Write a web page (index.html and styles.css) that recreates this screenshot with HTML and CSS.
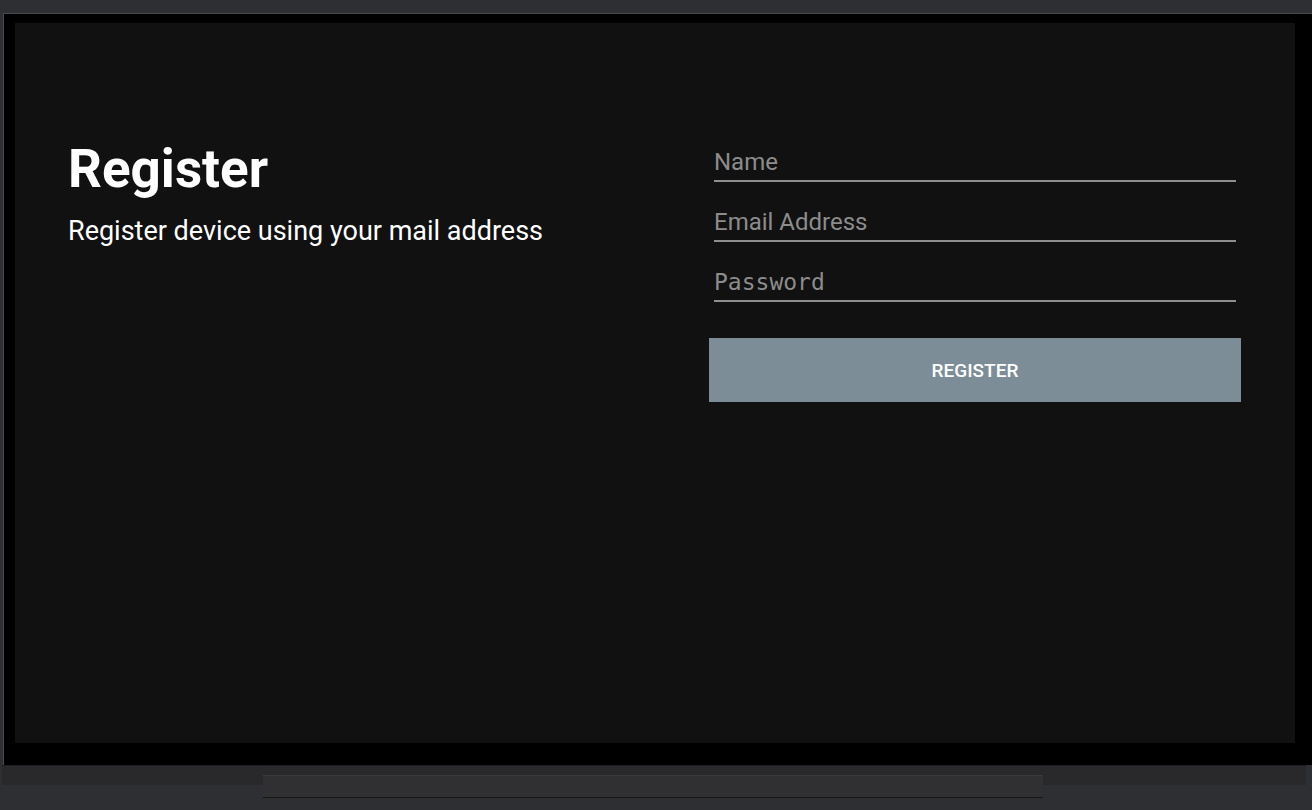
FILE: index.html
```html
<!DOCTYPE html>
<html lang="en">
<head>
<meta charset="utf-8">
<title>Register</title>
<link rel="stylesheet" href="styles.css">
</head>
<body>
<div class="device">
  <div class="tv">
    <div class="screen">
      <div class="intro">
        <h1 class="title">Register</h1>
        <p class="subtitle">Register device using your mail address</p>
      </div>
      <form class="form">
        <label class="field first"><span class="placeholder">Name</span></label>
        <label class="field"><span class="placeholder">Email Address</span></label>
        <label class="field"><span class="placeholder mono">Password</span></label>
        <button type="button" class="btn">REGISTER</button>
      </form>
    </div>
  </div>
  <div class="base"></div>
  <div class="stand"></div>
</div>
</body>
</html>
```
FILE: styles.css
```css
html, body {
  margin: 0;
  padding: 0;
}
body {
  background: #2e2f32;
  width: 1312px;
  height: 810px;
  overflow: hidden;
  font-family: Roboto, "Liberation Sans", sans-serif;
}
.device {
  padding-top: 13px;
  display: flex;
  flex-direction: column;
}
.tv {
  margin-left: 3px;
  width: 1289px;
  background: #000;
  border-top: 1px solid #48494c;
  border-left: 1px solid #48494c;
  border-right: 2px solid #3a3b3e;
  padding: 9px 9px 22px 11px;
}
.screen {
  width: 1280px;
  height: 720px;
  background: #111111;
  box-sizing: border-box;
  padding: 114px 54px 0 53px;
  display: flex;
  justify-content: space-between;
}
.intro {
  color: #fff;
}
.title {
  margin: 0;
  font-size: 53px;
  font-weight: 700;
  line-height: 64px;
}
.subtitle {
  margin: 0;
  margin-top: 14px;
  font-size: 27px;
  line-height: 32px;
}
.form {
  width: 532px;
  display: flex;
  flex-direction: column;
}
.field {
  display: block;
  margin: 0 5px;
  height: 60px;
  box-sizing: border-box;
  border-bottom: 2px solid #8e8e8e;
}
.field.first {
  height: 45px;
}
.placeholder {
  display: block;
  color: #8c8c8c;
  font-size: 24px;
  line-height: 30px;
  padding-top: 25px;
}
.field.first .placeholder {
  padding-top: 10px;
}
.mono {
  font-family: "DejaVu Sans Mono", "Liberation Mono", monospace;
  font-size: 23px;
}
.btn {
  margin-top: 36px;
  height: 64px;
  width: 532px;
  border: 0;
  background: #7d8d98;
  color: #fff;
  font-family: Roboto, "Liberation Sans", sans-serif;
  font-weight: 500;
  font-size: 19px;
  padding: 0;
}
.base {
  margin-left: 2px;
  width: 1304px;
  height: 20px;
  background: #29292b;
  border-top: 1px solid #1e1e20;
  box-sizing: border-box;
}
.stand {
  margin-left: 263px;
  margin-top: -10px;
  width: 780px;
  height: 22px;
  background: #303032;
  box-shadow: 0 1px 0 #161617;
  border-top: 1px solid #3a3a3c;
  box-sizing: border-box;
}
```
